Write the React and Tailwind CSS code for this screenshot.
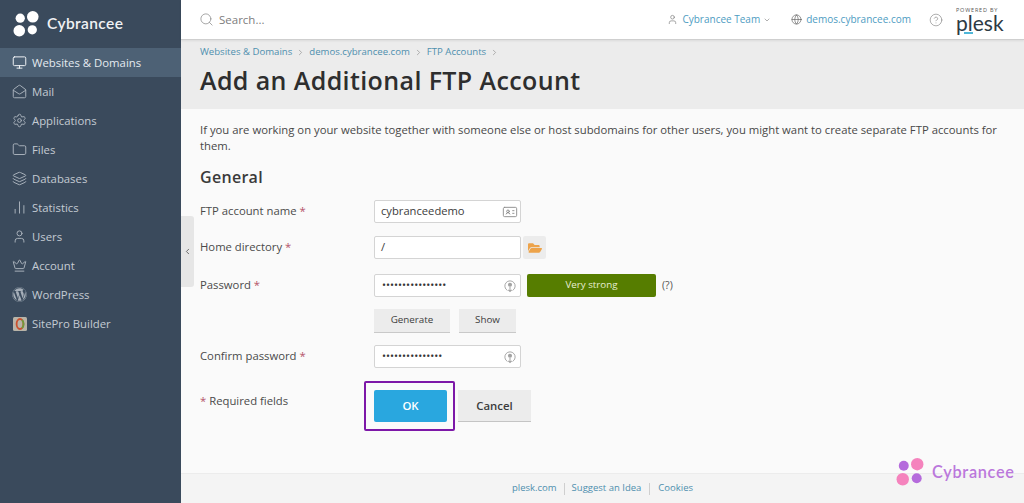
import React from "react";
import { Monitor, MailOpen, Settings, Folder, Layers, BarChart2, User, Crown, Search, ChevronDown, Globe, HelpCircle, ChevronLeft, ChevronRight, IdCard } from "lucide-react";
import { FaWordpress, FaFolderOpen } from "react-icons/fa";

const nav = [
  ["Websites & Domains", Monitor],
  ["Mail", MailOpen],
  ["Applications", Settings],
  ["Files", Folder],
  ["Databases", Layers],
  ["Statistics", BarChart2],
  ["Users", User],
  ["Account", Crown],
  ["WordPress", FaWordpress],
  ["SitePro Builder", null],
];

function Dots({ a, b, className }) {
  return (
    <svg viewBox="0 0 28 28" className={className}>
      <circle cx="7.5" cy="7.5" r="4.8" fill={a} />
      <circle cx="20.5" cy="6" r="6" fill={b} />
      <circle cx="6.5" cy="20.5" r="6" fill={b} />
      <circle cx="20" cy="19.5" r="4.8" fill={a} />
    </svg>
  );
}

function SiteProIcon() {
  return (
    <svg viewBox="0 0 14 14" className="w-[14px] h-[14px]">
      <rect width="14" height="14" rx="1.5" fill="#b9b4a8" />
      <ellipse cx="7" cy="7" rx="3.4" ry="5" fill="none" stroke="#c9502e" strokeWidth="1.8" />
      <path d="M9 3 A4 5 0 0 1 9 11" fill="none" stroke="#6f9a3a" strokeWidth="1.8" />
    </svg>
  );
}

function PassIcon() {
  return (
    <svg viewBox="0 0 14 16" className="w-[12px] h-[14px] text-[#a3a3a3] mr-[2px]" fill="none" stroke="currentColor">
      <path d="M4 13.2 A6 6 0 1 1 10 13.2" strokeWidth="1.1" />
      <circle cx="7" cy="6.5" r="2.4" fill="currentColor" stroke="none" />
      <path d="M7 9v5.2M5 12.4l2 2 2-2" strokeWidth="1.2" />
    </svg>
  );
}

function Req() {
  return <span className="text-[#b5546a]">*</span>;
}

function Row({ label, children, className }) {
  return (
    <div className={`flex items-center ${className}`}>
      <div className="w-[174px] text-[11.3px] text-[#4a4a4a]">
        {label} <Req />
      </div>
      {children}
    </div>
  );
}

function Field({ value, icon, dots }) {
  return (
    <div className="w-[147px] h-[23px] bg-white border border-[#d4d4d4] rounded-[2px] flex items-center pl-[6px] pr-[2px] justify-between">
      <span className={dots ? "text-[10.7px] text-[#333] pl-px" : "text-[11.2px] text-[#3c3c3c]"}>{value}</span>
      {icon}
    </div>
  );
}

export default function App() {
  return (
    <div className="relative flex w-[1024px] h-[503px] overflow-hidden bg-[#fafafa] font-['Open_Sans',sans-serif]">
      <aside className="w-[181px] shrink-0 bg-[#3a4a5c] flex flex-col">
        <div className="h-[48px] flex items-center pl-[13px] gap-[7px]">
          <Dots a="#fff" b="#fff" className="w-[27px] h-[27px]" />
          <span className="text-[15.5px] font-semibold text-[#f0f2f4] font-['Lato',sans-serif] tracking-[0.4px]">Cybrancee</span>
        </div>
        <nav className="flex flex-col">
          {nav.map(([label, Icon], i) => (
            <div
              key={label}
              className={`h-[29px] flex items-center pl-[12px] gap-[5px] text-[11.35px] ${i === 0 ? "bg-[#4d6175] text-[#e4eaf0]" : "text-[#c4cbd3]"}`}
            >
              <span className="w-[15px] flex justify-center">
                {Icon ? (
                  <Icon size={15} strokeWidth={1.6} className={i === 0 ? "text-[#eef1f4]" : "text-[#a6afb9]"} />
                ) : (
                  <SiteProIcon />
                )}
              </span>
              {label}
            </div>
          ))}
        </nav>
      </aside>

      <main className="flex-1 flex flex-col min-w-0">
        <header className="h-[40px] shrink-0 bg-white border-b border-[#cfcfcf] shadow-[0_1px_2px_rgba(0,0,0,0.08)] flex items-center pl-[18px] pr-[21px] z-10">
          <Search size={15} strokeWidth={1.2} className="text-[#8a8a8a]" />
          <span className="ml-[5px] text-[11.5px] text-[#7d7d7d]">Search...</span>
          <div className="ml-auto flex items-center text-[10px] text-[#4e9cc2]">
            <User size={11} strokeWidth={1.4} className="text-[#777]" />
            <span className="ml-[4px]">Cybrancee Team</span>
            <ChevronDown size={8} strokeWidth={2} className="ml-[3px] text-[#888]" />
            <Globe size={11} strokeWidth={1.5} className="ml-[20px] text-[#666]" />
            <span className="ml-[4px]">demos.cybrancee.com</span>
            <HelpCircle size={14} strokeWidth={1} className="ml-[18px] text-[#777]" />
          </div>
          <div className="ml-[13px] flex flex-col items-start w-[47px]">
            <span className="text-[5.5px] leading-[7px] tracking-[0.8px] text-[#555] whitespace-nowrap">POWERED BY</span>
            <span className="relative text-[21px] leading-[18px] text-[#2d3a44] font-['Lato',sans-serif]">
              plesk
              <span className="absolute left-[8px] bottom-[-2px] w-[9px] h-[2px] bg-[#4fb7d8]" />
            </span>
          </div>
        </header>

        <div className="h-[69px] shrink-0 bg-[#ececec] pl-[19px] pt-[5px]">
          <div className="flex items-center text-[9.6px] text-[#4e8fae] h-[14px]">
            Websites &amp; Domains
            <ChevronRight size={9} className="mx-[4px] text-[#999]" />
            demos.cybrancee.com
            <ChevronRight size={9} className="mx-[4px] text-[#999]" />
            FTP Accounts
            <ChevronRight size={9} className="mx-[4px] text-[#999]" />
          </div>
          <h1 className="mt-[4px] text-[25px] leading-[34px] font-semibold text-[#2e2e2e] tracking-[0.39px]">Add an Additional FTP Account</h1>
        </div>

        <div className="flex-1 pl-[19px] pr-[24px] pt-[13px]">
          <p className="text-[11.3px] leading-[16px] text-[#484848]">
            If you are working on your website together with someone else or host subdomains for other users, you might want to create separate FTP accounts for them.
          </p>
          <h2 className="mt-[12px] text-[16px] leading-[22px] font-semibold text-[#3a3a3a] tracking-[0.3px]">General</h2>

          <Row label="FTP account name" className="mt-[12px]">
            <Field value="cybranceedemo" icon={<IdCard size={16} strokeWidth={1.4} className="text-[#8c8c8c]" />} />
          </Row>
          <Row label="Home directory" className="mt-[13px]">
            <Field value="/" />
            <div className="ml-[2px] w-[23px] h-[23px] bg-[#ececec] flex items-center justify-center rounded-[2px]">
              <FaFolderOpen size={14} className="text-[#eda34a]" />
            </div>
          </Row>
          <Row label="Password" className="mt-[15px]">
            <Field value="••••••••••••••••" dots icon={<PassIcon />} />
            <div className="ml-[6px] w-[129px] h-[23px] bg-[#567d00] rounded-[2px] text-[9.8px] text-[#e6eed2] flex items-center justify-center">Very strong</div>
            <span className="ml-[6px] text-[10.5px] text-[#555]">(?)</span>
          </Row>
          <div className="mt-[12px] pl-[174px] flex gap-[9px]">
            <div className="w-[76px] h-[24px] bg-[#ececec] border-b border-[#c9c9c9] text-[9.8px] text-[#3c3c3c] flex items-center justify-center">Generate</div>
            <div className="w-[57px] h-[24px] bg-[#ececec] border-b border-[#c9c9c9] text-[9.8px] text-[#3c3c3c] flex items-center justify-center">Show</div>
          </div>
          <Row label="Confirm password" className="mt-[12px]">
            <Field value="•••••••••••••••" dots icon={<PassIcon />} />
          </Row>
          <div className="mt-[22px] flex items-start">
            <div className="w-[174px] pt-[2px] text-[11.3px] leading-[17px] text-[#4a4a4a]">
              <Req /> Required fields
            </div>
            <div className="w-[73px] h-[32px] bg-[#29a7df] rounded-[2px] text-[11.4px] font-semibold text-white flex items-center justify-center">OK</div>
            <div className="ml-[11px] w-[73px] h-[32px] bg-[#ececec] border-b border-[#c4c4c4] text-[11.4px] font-semibold text-[#3c3c3c] flex items-center justify-center">Cancel</div>
          </div>
        </div>

        <footer className="h-[30px] shrink-0 bg-[#f4f4f4] border-t border-[#ececec] flex items-center justify-center text-[9.5px] text-[#4e8fae]">
          <span>plesk.com</span>
          <span className="mx-[7px] h-[12px] w-px bg-[#cfcfcf]" />
          <span>Suggest an Idea</span>
          <span className="mx-[8px] h-[12px] w-px bg-[#cfcfcf]" />
          <span>Cookies</span>
        </footer>
      </main>

      <div className="absolute left-[181px] top-[216px] w-[13px] h-[71px] bg-[#e6e6e6] rounded-r-[3px] flex items-center justify-center">
        <ChevronLeft size={9} strokeWidth={2} className="text-[#444]" />
      </div>
      <div className="absolute left-[364px] top-[381px] w-[91px] h-[50px] border-[2px] border-[#7d18a8] rounded-[2px]" />
      <div className="absolute left-[896px] top-[458px] flex items-center gap-[7px]">
        <Dots a="#b56bdc" b="#f583bd" className="w-[29px] h-[29px]" />
        <span className="text-[16.3px] font-semibold text-[#bb78dc] font-['Lato',sans-serif] tracking-[0.7px]">Cybrancee</span>
      </div>
    </div>
  );
}
